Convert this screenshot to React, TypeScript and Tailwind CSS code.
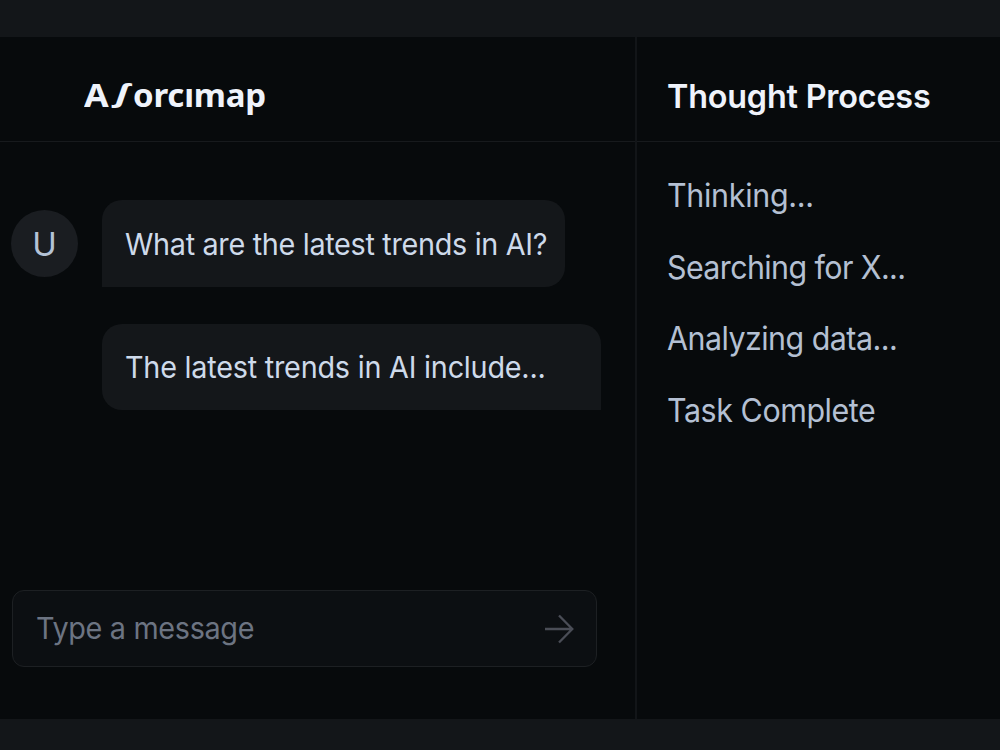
import { useState } from 'react'

type Message = {
  id: string
  author: 'user' | 'agent'
  text: string
}

const MESSAGES: Message[] = [
  { id: 'm1', author: 'user', text: 'What are the latest trends in AI?' },
  { id: 'm2', author: 'agent', text: 'The latest trends in AI include...' },
]

const THOUGHTS = [
  { text: 'Thinking...', tracking: 'tracking-[-0.3px]' },
  { text: 'Searching for X...', tracking: 'tracking-[-0.62px]' },
  { text: 'Analyzing data...', tracking: 'tracking-[-0.55px]' },
  { text: 'Task Complete', tracking: 'tracking-[-0.45px]' },
]

function Logo() {
  return (
    <div className="flex items-baseline whitespace-nowrap font-['Noto_Sans',sans-serif] text-[33px] font-bold leading-[44px] text-[#eff3fb]">
      <span className="w-[32px] origin-left scale-x-[1.08]">A</span>
      {/* the esh sits on the baseline, without its descender */}
      <span className="relative -top-[5px] w-[17px] origin-left scale-x-[1.6] text-[25px] italic leading-none">ʃ</span>
      <span className="tracking-[-0.2px]">orcımap</span>
    </div>
  )
}

function ChatMessage({ message }: { message: Message }) {
  const isUser = message.author === 'user'
  return (
    <div className="flex items-center">
      <div className="w-[91px] shrink-0">
        {isUser && (
          <div className="flex h-[67px] w-[67px] items-center justify-center rounded-full bg-[#1a1d21] pt-0.5 text-[33px] leading-none text-[#b4c2d6]">
            U
          </div>
        )}
      </div>
      <div
        className={
          isUser
            ? 'flex h-[87px] w-[463px] items-center rounded-[20px] rounded-bl-none bg-[#14171a] pl-[23px] tracking-[-0.33px]'
            : 'flex h-[86px] w-[499px] items-center rounded-[20px] rounded-br-none bg-[#14171a] pl-[23px] tracking-[-0.24px]'
        }
      >
        <span className="origin-left scale-x-[0.96] whitespace-nowrap text-[30px] leading-none text-[#cedaea]">
          {message.text}
        </span>
      </div>
    </div>
  )
}

export default function App() {
  const [draft, setDraft] = useState('')

  return (
    <div className="flex h-[750px] w-[1000px] flex-col overflow-hidden bg-[#131619] font-['Inter',sans-serif]">
      <div className="h-[37px] shrink-0" />
      <div className="flex h-[682px] bg-[#070a0c]">
        {/* Chat column */}
        <main className="flex w-[637px] shrink-0 flex-col border-r-2 border-[#121518]">
          <header className="flex h-[105px] shrink-0 items-center border-b border-[#171a1d] pl-[84px] pt-3">
            <Logo />
          </header>
          <div className="flex flex-1 flex-col gap-[37px] pl-[11px] pt-[58px]">
            {MESSAGES.map((message) => (
              <ChatMessage key={message.id} message={message} />
            ))}
          </div>
          <form
            className="mb-[52px] ml-3 flex h-[77px] w-[585px] shrink-0 items-center rounded-xl border border-[#1d2023] bg-[#0c0f12] pl-[23px] pr-[22px]"
            onSubmit={(e) => e.preventDefault()}
          >
            <input
              value={draft}
              onChange={(e) => setDraft(e.target.value)}
              placeholder="Type a message"
              className="min-w-0 flex-1 origin-left scale-x-[0.96] bg-transparent pb-0.5 text-[30px] leading-none tracking-[-0.35px] text-[#cedaea] outline-none placeholder:text-[#6c7482]"
            />
            <button type="submit" aria-label="Send" className="shrink-0">
              <svg width="30" height="30" viewBox="0 0 30 30" fill="none" stroke="#4a4d56" strokeWidth="2.3">
                <path d="M1 15H28M15 1.5L28.3 15L15 28.5" />
              </svg>
            </button>
          </form>
        </main>

        {/* Agent activity */}
        <aside className="flex flex-1 flex-col">
          <header className="flex h-[105px] shrink-0 items-center border-b border-[#171a1d] pl-[30px] pt-3.5">
            <h2 className="origin-left scale-x-[0.98] whitespace-nowrap text-[33px] font-semibold leading-none tracking-[-0.2px] text-[#eff3fb]">
              Thought Process
            </h2>
          </header>
          <ul className="flex flex-col gap-[39.5px] pl-[30px] pt-[38px]">
            {THOUGHTS.map(({ text, tracking }) => (
              <li
                key={text}
                className={`origin-left scale-x-[0.95] whitespace-nowrap text-[32px] leading-[32px] text-[#b4c0d3] ${tracking}`}
              >
                {text}
              </li>
            ))}
          </ul>
        </aside>
      </div>
    </div>
  )
}
